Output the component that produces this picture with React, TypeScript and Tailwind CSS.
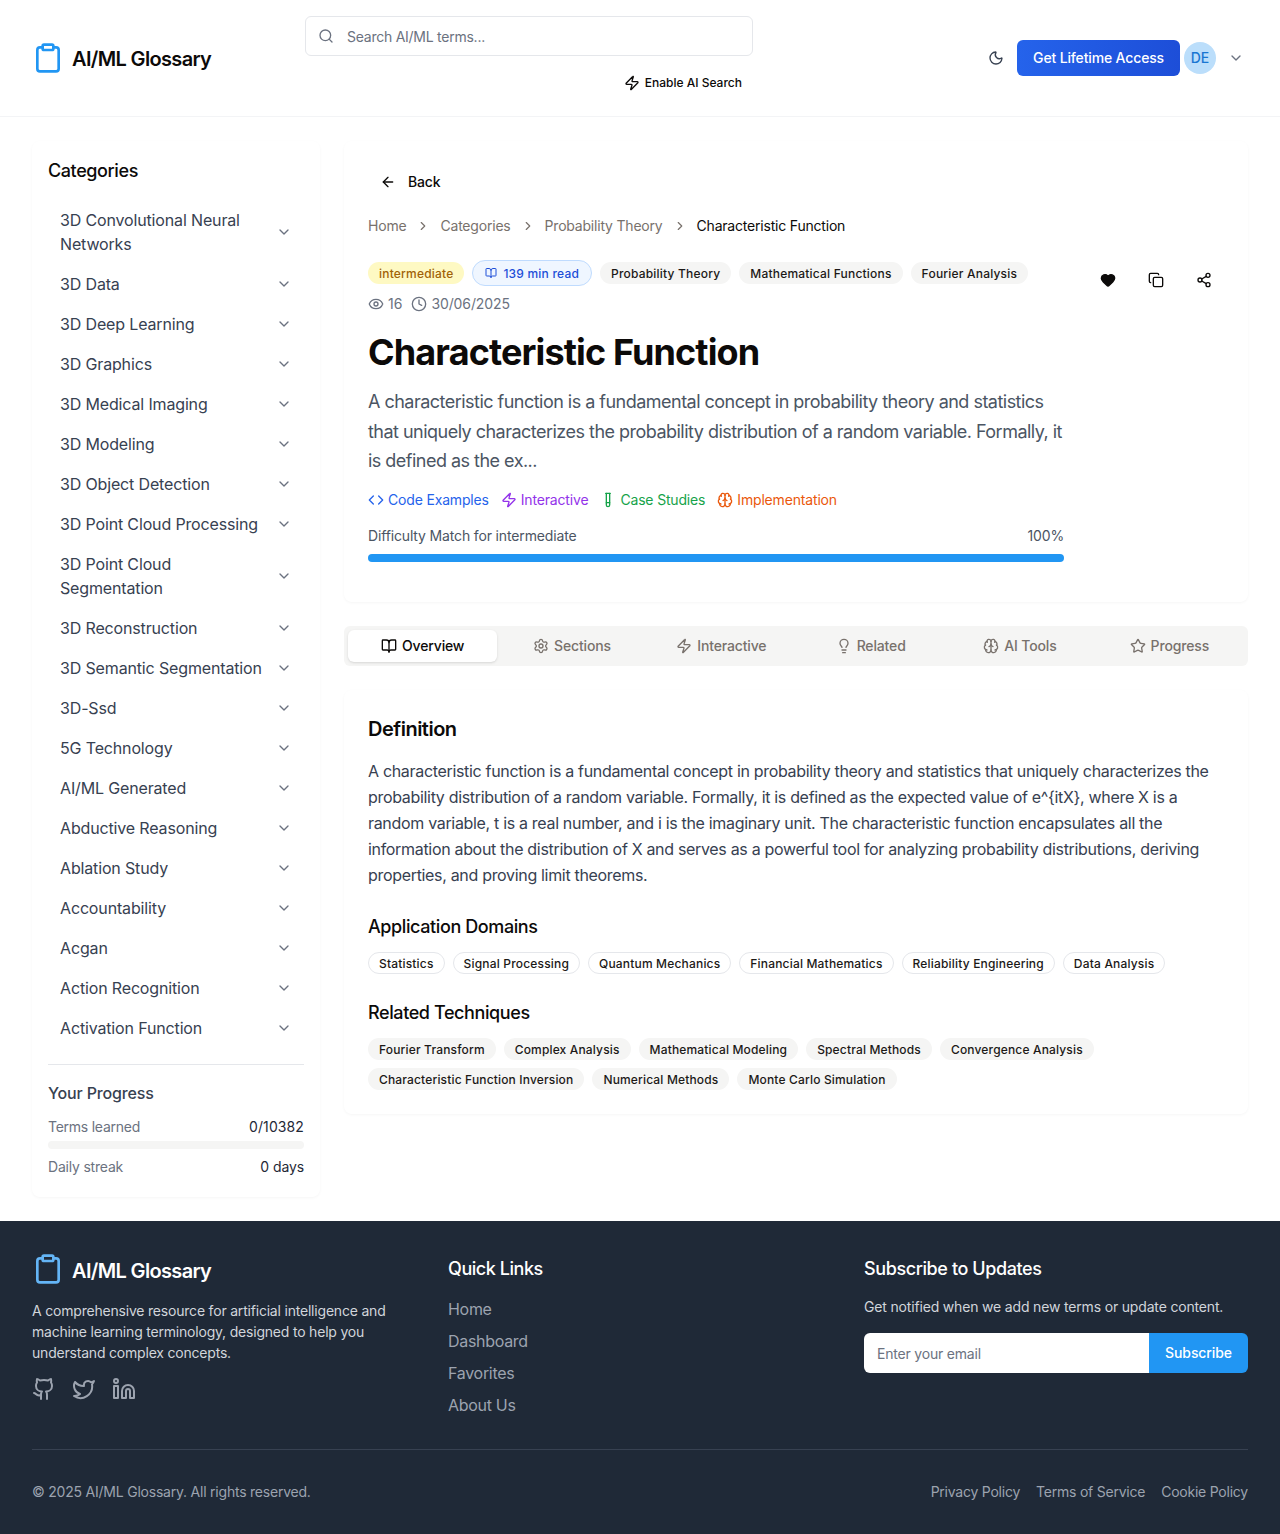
import {
  ArrowLeft,
  BookOpen,
  Brain,
  ChevronDown,
  ChevronRight,
  Clipboard,
  Clock,
  Code,
  Copy,
  Eye,
  Github,
  Heart,
  Lightbulb,
  Linkedin,
  Moon,
  Search,
  Settings,
  Share2,
  Star,
  TestTube,
  Twitter,
  Zap,
} from 'lucide-react';

const categories = [
  '3D Convolutional Neural Networks',
  '3D Data',
  '3D Deep Learning',
  '3D Graphics',
  '3D Medical Imaging',
  '3D Modeling',
  '3D Object Detection',
  '3D Point Cloud Processing',
  '3D Point Cloud Segmentation',
  '3D Reconstruction',
  '3D Semantic Segmentation',
  '3D-Ssd',
  '5G Technology',
  'AI/ML Generated',
  'Abductive Reasoning',
  'Ablation Study',
  'Accountability',
  'Acgan',
  'Action Recognition',
  'Activation Function',
];

const tabs = [
  { label: 'Overview', icon: BookOpen },
  { label: 'Sections', icon: Settings },
  { label: 'Interactive', icon: Zap },
  { label: 'Related', icon: Lightbulb },
  { label: 'AI Tools', icon: Brain },
  { label: 'Progress', icon: Star },
];

const domains = [
  'Statistics',
  'Signal Processing',
  'Quantum Mechanics',
  'Financial Mathematics',
  'Reliability Engineering',
  'Data Analysis',
];

const techniques = [
  'Fourier Transform',
  'Complex Analysis',
  'Mathematical Modeling',
  'Spectral Methods',
  'Convergence Analysis',
  'Characteristic Function Inversion',
  'Numerical Methods',
  'Monte Carlo Simulation',
];

const Header = () => (
  <header className="flex h-[117px] items-start border-b border-[#f3f4f6] bg-white px-8">
    <div className="flex h-[116px] w-[273px] items-center gap-2">
      <Clipboard className="h-8 w-8 text-[#2196f3]" />
      <span className="pt-px text-xl font-semibold tracking-[-0.65px] text-[#0c0a09]">AI/ML Glossary</span>
    </div>
    <div className="w-[448px] pt-4">
      <div className="flex h-10 items-center rounded-md border border-[#e5e7eb] bg-white px-3">
        <Search className="h-4 w-4 text-[#6b7280]" />
        <span className="ml-[13px] pt-[2px] text-sm tracking-[-0.25px] text-[#6b7280]">Search AI/ML terms...</span>
      </div>
      <div className="mt-[17px] flex items-center justify-end gap-[5px] pr-[11px] text-xs font-medium text-[#0c0a09]">
        <Zap className="h-4 w-4" />
        <span className="py-[2px]">Enable AI Search</span>
      </div>
    </div>
    <div className="ml-auto flex h-[116px] items-center">
      <Moon className="h-4 w-4 text-[#374151]" />
      <div className="ml-[13px] flex h-9 items-center rounded-md bg-gradient-to-r from-[#2563eb] to-[#1d4ed8] px-4 text-sm font-medium tracking-[-0.15px] text-white">
        Get Lifetime Access
      </div>
      <div className="ml-[4px] flex h-8 w-8 items-center justify-center rounded-full bg-[#bbdefb] text-sm font-medium text-[#1976d2]">
        DE
      </div>
      <ChevronDown className="ml-3 mr-1 h-4 w-4 text-[#6b7280]" />
    </div>
  </header>
);

const Sidebar = () => (
  <aside className="w-72 shrink-0 rounded-lg bg-white px-4 pb-5 pt-4 shadow-[0_1px_3px_rgba(0,0,0,0.04)]">
    <h2 className="text-lg font-medium tracking-[-0.4px] text-[#0c0a09]">Categories</h2>
    <div className="mt-[15px]">
      {categories.map((name) => (
        <div key={name} className="flex items-center justify-between px-3 py-2 text-base tracking-[-0.15px] text-[#374151]">
          <span className="max-w-[212px]">{name}</span>
          <ChevronDown className="h-4 w-4 shrink-0 text-[#6b7280]" />
        </div>
      ))}
    </div>
    <div className="mt-4 border-t border-[#e5e7eb] pt-4">
      <h3 className="text-base font-medium tracking-[-0.15px] text-[#374151]">Your Progress</h3>
      <div className="mt-[12px] flex justify-between text-sm">
        <span className="tracking-[-0.25px] text-[#6b7280]">Terms learned</span>
        <span className="tracking-[0.1px] text-[#1f2937]">0/10382</span>
      </div>
      <div className="mt-[4px] h-2 rounded-full bg-[#f5f5f4]" />
      <div className="mt-2 flex justify-between text-sm">
        <span className="tracking-[-0.2px] text-[#6b7280]">Daily streak</span>
        <span className="tracking-[-0.1px] text-[#1f2937]">0 days</span>
      </div>
    </div>
  </aside>
);

const TitleCard = () => (
  <section className="rounded-lg bg-white px-6 pb-10 pt-6 shadow-[0_1px_3px_rgba(0,0,0,0.04)]">
    <div className="flex h-[34px] items-center gap-3 px-3 text-sm font-medium tracking-[-0.15px] text-[#0c0a09]">
      <ArrowLeft className="h-4 w-4" />
      <span>Back</span>
    </div>
    <nav className="mt-[17px] flex items-center text-sm tracking-[-0.2px] text-[#78716c]">
      <span>Home</span>
      <ChevronRight className="mx-[10px] h-3.5 w-3.5" />
      <span>Categories</span>
      <ChevronRight className="mx-[10px] h-3.5 w-3.5" />
      <span>Probability Theory</span>
      <ChevronRight className="mx-[10px] h-3.5 w-3.5" />
      <span className="text-[#0c0a09]">Characteristic Function</span>
    </nav>
    <div className="mt-6 flex items-start justify-between">
      <div className="w-[696px]">
        <div className="flex h-[26px] items-center gap-2 text-xs font-medium tracking-[0.2px]">
          <span className="rounded-full bg-[#fef9c3] px-[11px] pb-[2px] pt-[4px] text-[#a16207]">intermediate</span>
          <span className="flex items-center gap-[6px] rounded-full border border-[#bfdbfe] bg-[#eff6ff] px-3 pb-[3px] pt-[5px] text-[#1d4ed8]">
            <BookOpen className="-mt-[2px] h-3 w-3" />
            139 min read
          </span>
          <span className="rounded-full bg-[#f5f5f4] px-[11px] pb-[2px] pt-[4px] text-[#1c1917]">Probability Theory</span>
          <span className="rounded-full bg-[#f5f5f4] px-[11px] pb-[2px] pt-[4px] text-[#1c1917]">Mathematical Functions</span>
          <span className="rounded-full bg-[#f5f5f4] px-[11px] pb-[2px] pt-[4px] text-[#1c1917]">Fourier Analysis</span>
        </div>
        <div className="mt-2 flex items-center text-sm text-[#6b7280]">
          <Eye className="h-4 w-4" />
          <span className="ml-1">16</span>
          <Clock className="ml-[9px] h-4 w-4" />
          <span className="ml-1 tracking-[-0.1px]">30/06/2025</span>
        </div>
        <h1 className="mt-[18px] text-4xl font-bold tracking-[-0.87px] text-[#0c0a09]">Characteristic Function</h1>
        <p className="mt-[15.3px] text-lg leading-relaxed tracking-[-0.52px] text-[#4b5563]">
          A characteristic function is a fundamental concept in probability theory and statistics that uniquely
          characterizes the probability distribution of a random variable. Formally, it is defined as the ex...
        </p>
        <div className="mt-[14.7px] flex items-center gap-3 text-sm tracking-[-0.17px]">
          <span className="flex items-center gap-1 text-[#2563eb]">
            <Code className="h-4 w-4" />
            Code Examples
          </span>
          <span className="flex items-center gap-1 text-[#9333ea]">
            <Zap className="h-4 w-4" />
            Interactive
          </span>
          <span className="flex items-center gap-1 text-[#16a34a]">
            <TestTube className="h-4 w-4" />
            Case Studies
          </span>
          <span className="flex items-center gap-1 text-[#ea580c]">
            <Brain className="h-4 w-4" />
            Implementation
          </span>
        </div>
        <div className="mt-4 flex justify-between text-sm tracking-[-0.15px] text-[#4b5563]">
          <span>Difficulty Match for intermediate</span>
          <span>100%</span>
        </div>
        <div className="mt-2 h-2 rounded-full bg-[#2196f3]" />
      </div>
      <div className="flex gap-2">
        <div className="flex h-10 w-10 items-center justify-center">
          <Heart className="h-4 w-4 fill-[#0c0a09] text-[#0c0a09]" />
        </div>
        <div className="flex h-10 w-10 items-center justify-center">
          <Copy className="h-4 w-4 text-[#0c0a09]" />
        </div>
        <div className="flex h-10 w-10 items-center justify-center">
          <Share2 className="h-4 w-4 text-[#0c0a09]" />
        </div>
      </div>
    </div>
  </section>
);

const TabBar = () => (
  <div className="mt-6 grid h-10 grid-cols-6 rounded-md bg-[#f5f5f4] p-1">
    {tabs.map((tab, i) => {
      const Icon = tab.icon;
      return (
        <div
          key={tab.label}
          className={
            i === 0
              ? 'flex items-center justify-center gap-[5px] rounded-md bg-white text-sm font-medium tracking-[-0.15px] text-[#0c0a09] shadow-sm'
              : 'flex items-center justify-center gap-[5px] rounded-md text-sm font-medium tracking-[-0.15px] text-[#78716c]'
          }
        >
          <Icon className="h-4 w-4" />
          {tab.label}
        </div>
      );
    })}
  </div>
);

const Definition = () => (
  <section className="mt-6 rounded-lg bg-white px-6 pb-6 pt-[25px] shadow-[0_1px_3px_rgba(0,0,0,0.04)]">
    <h2 className="text-xl font-semibold tracking-[-0.5px] text-[#0c0a09]">Definition</h2>
    <p className="mt-[15px] text-base leading-relaxed tracking-[-0.32px] text-[#374151]">
      A characteristic function is a fundamental concept in probability theory and statistics that uniquely
      characterizes the probability distribution of a random variable. Formally, it is defined as the expected value
      of e^&#123;itX&#125;, where X is a random variable, t is a real number, and i is the imaginary unit. The
      characteristic function encapsulates all the information about the distribution of X and serves as a powerful
      tool for analyzing probability distributions, deriving properties, and proving limit theorems.
    </p>
    <h3 className="mt-[25px] text-lg font-medium tracking-[-0.4px] text-[#0c0a09]">Application Domains</h3>
    <div className="mt-[11px] flex flex-wrap gap-2">
      {domains.map((d) => (
        <span key={d} className="rounded-full border border-[#e5e7eb] px-[10px] pb-[1px] pt-[3px] text-xs font-medium tracking-[0.18px] text-[#1c1917]">
          {d}
        </span>
      ))}
    </div>
    <h3 className="mt-[25px] text-lg font-medium tracking-[-0.4px] text-[#0c0a09]">Related Techniques</h3>
    <div className="mt-[11px] flex flex-wrap gap-2">
      {techniques.map((t) => (
        <span key={t} className="rounded-full bg-[#f5f5f4] px-[11px] pb-[2px] pt-[4px] text-xs font-medium tracking-[0.16px] text-[#1c1917]">
          {t}
        </span>
      ))}
    </div>
  </section>
);

const Footer = () => (
  <footer className="bg-[#1f2937] px-8 pb-8 pt-8">
    <div className="grid grid-cols-3 gap-8">
      <div>
        <div className="flex items-center gap-2">
          <Clipboard className="h-8 w-8 text-[#64b5f6]" />
          <span className="pt-[3px] text-xl font-semibold tracking-[-0.65px] text-white">AI/ML Glossary</span>
        </div>
        <p className="mt-[15px] text-sm leading-[21px] tracking-[-0.2px] text-[#d1d5db]">
          A comprehensive resource for artificial intelligence and machine learning terminology, designed to help you
          understand complex concepts.
        </p>
        <div className="mt-[14px] flex gap-4 text-[#9ca3af]">
          <Github className="h-6 w-6" />
          <Twitter className="h-6 w-6" />
          <Linkedin className="h-6 w-6" />
        </div>
      </div>
      <div>
        <h3 className="pt-[2px] text-lg font-medium tracking-[-0.45px] text-white">Quick Links</h3>
        <ul className="mt-[14px] flex flex-col gap-2 text-base tracking-[-0.3px] text-[#9ca3af]">
          <li>Home</li>
          <li>Dashboard</li>
          <li>Favorites</li>
          <li>About Us</li>
        </ul>
      </div>
      <div>
        <h3 className="pt-[2px] text-lg font-medium tracking-[-0.4px] text-white">Subscribe to Updates</h3>
        <p className="mt-[14px] text-sm tracking-[-0.17px] text-[#d1d5db]">Get notified when we add new terms or update content.</p>
        <div className="mt-4 flex h-10">
          <div className="flex flex-1 items-center rounded-l-md bg-white px-[13px] pt-[2px] text-sm tracking-[-0.2px] text-[#6b7280]">Enter your email</div>
          <div className="flex w-[99px] items-center justify-center rounded-r-md bg-[#2196f3] text-sm font-medium tracking-[-0.1px] text-white">
            Subscribe
          </div>
        </div>
      </div>
    </div>
    <div className="mt-8 flex items-center justify-between border-t border-[#374151] pt-8 text-sm tracking-[-0.22px] text-[#9ca3af]">
      <span>© 2025 AI/ML Glossary. All rights reserved.</span>
      <div className="flex gap-4 tracking-[-0.23px]">
        <span>Privacy Policy</span>
        <span>Terms of Service</span>
        <span>Cookie Policy</span>
      </div>
    </div>
  </footer>
);

export default function App() {
  return (
    <div className="min-h-screen bg-white font-['Inter',sans-serif]">
      <Header />
      <main className="flex items-start gap-6 px-8 py-6">
        <Sidebar />
        <div className="min-w-0 flex-1">
          <TitleCard />
          <TabBar />
          <Definition />
        </div>
      </main>
      <Footer />
    </div>
  );
}
